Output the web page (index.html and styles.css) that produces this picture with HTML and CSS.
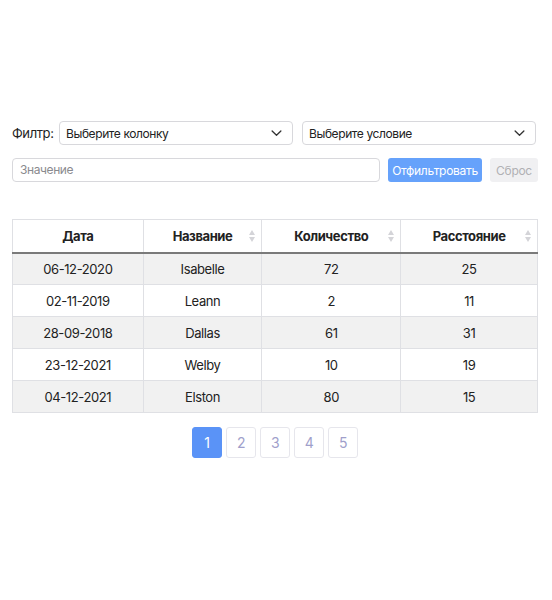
FILE: index.html
```html
<!DOCTYPE html>
<html lang="ru">
<head>
<meta charset="utf-8">
<link rel="stylesheet" href="styles.css">
</head>
<body>
<div class="page">
  <div class="filter-row">
    <span class="label">Филтр:</span>
    <div class="select"><span>Выберите колонку</span><svg class="chev" viewBox="0 0 12 8" width="11" height="7"><path d="M1 1.2 L6 6 L11 1.2" fill="none" stroke="#333" stroke-width="1.5" stroke-linecap="round" stroke-linejoin="round"/></svg></div>
    <div class="select"><span>Выберите условие</span><svg class="chev" viewBox="0 0 12 8" width="11" height="7"><path d="M1 1.2 L6 6 L11 1.2" fill="none" stroke="#333" stroke-width="1.5" stroke-linecap="round" stroke-linejoin="round"/></svg></div>
  </div>
  <div class="value-row">
    <div class="input">Значение</div>
    <button class="btn primary">Отфильтровать</button>
    <button class="btn reset">Сброс</button>
  </div>
  <table class="grid">
    <thead>
      <tr>
        <th class="c1">Дата</th>
        <th class="c2 sortable">Название<span class="sort"></span></th>
        <th class="c3 sortable">Количество<span class="sort"></span></th>
        <th class="c4 sortable">Расстояние<span class="sort"></span></th>
      </tr>
    </thead>
    <tbody>
      <tr><td>06-12-2020</td><td>Isabelle</td><td>72</td><td>25</td></tr>
      <tr><td>02-11-2019</td><td>Leann</td><td>2</td><td>11</td></tr>
      <tr><td>28-09-2018</td><td>Dallas</td><td>61</td><td>31</td></tr>
      <tr><td>23-12-2021</td><td>Welby</td><td>10</td><td>19</td></tr>
      <tr><td>04-12-2021</td><td>Elston</td><td>80</td><td>15</td></tr>
    </tbody>
  </table>
  <div class="pager">
    <span class="pg active">1</span>
    <span class="pg">2</span>
    <span class="pg">3</span>
    <span class="pg">4</span>
    <span class="pg">5</span>
  </div>
</div>
</body>
</html>
```
FILE: styles.css
```css
* { box-sizing: border-box; }
html, body { margin: 0; padding: 0; background: #fff; }
body {
  font-family: Inter, "Noto Sans", "DejaVu Sans", sans-serif;
  color: #222;
  letter-spacing: -0.025em;
}
.page {
  width: 552px;
  padding: 121px 14px 0 12px;
}
.filter-row {
  display: flex;
  align-items: center;
  height: 24px;
}
.label {
  font-size: 13px;
  width: 47px;
  color: #222;
}
.select {
  width: 234px;
  height: 24px;
  border: 1px solid #d8d8dc;
  border-radius: 4px;
  display: flex;
  align-items: center;
  justify-content: space-between;
  padding: 0 10px 0 6px;
  font-size: 12px;
  color: #222;
}
.select + .select { margin-left: 9px; }
.value-row {
  display: flex;
  align-items: center;
  gap: 8px;
  margin-top: 13px;
  height: 24px;
}
.input {
  width: 368px;
  height: 24px;
  border: 1px solid #d8d8dc;
  border-radius: 4px;
  padding: 0 7px;
  font-size: 12px;
  line-height: 22px;
  color: #8a8a8e;
}
.btn {
  height: 24px;
  border: none;
  border-radius: 3px;
  font-family: inherit;
  font-size: 12px;
  letter-spacing: -0.025em;
  padding: 0;
}
.primary {
  width: 94px;
  background: #66a2fb;
  color: #fff;
}
.reset {
  width: 48px;
  background: #f0f0f2;
  color: #b0b0b4;
}
.grid {
  margin-top: 37px;
  width: 526px;
  border-collapse: collapse;
  font-size: 13px;
  border: 1px solid #dfe0e4;
}
.grid th, .grid td {
  border-left: 1px solid #dfe0e4;
  border-right: 1px solid #dfe0e4;
  text-align: center;
  padding: 0;
}
.grid th {
  height: 33px;
  font-weight: 700;
  color: #222;
  border-bottom: 2px solid #7a7a7a;
  position: relative;
}
.grid td {
  height: 32px;
  border-top: 1px solid #dfe0e4;
  color: #222;
}
.grid tbody tr:nth-child(odd) { background: #f1f1f1; }
.c1 { width: 131px; }
.c2 { width: 119px; }
.c3 { width: 139px; }
.c4 { width: 137px; }
.sort {
  position: absolute;
  right: 5px;
  top: 50%;
  margin-top: -6px;
  width: 7px;
  height: 12px;
}
.sort::before, .sort::after {
  content: "";
  position: absolute;
  left: 0;
  border-left: 3.5px solid transparent;
  border-right: 3.5px solid transparent;
}
.sort::before { top: 0; border-bottom: 5px solid #d4d4d8; }
.sort::after { bottom: 0; border-top: 5px solid #d4d4d8; }
.pager {
  display: flex;
  justify-content: center;
  gap: 4px;
  margin-top: 14px;
}
.pg {
  width: 30px;
  height: 31px;
  border: 1px solid #e6e6ec;
  border-radius: 3px;
  display: flex;
  align-items: center;
  justify-content: center;
  font-size: 14px;
  color: #a09fcb;
}
.pg.active {
  background: #5a93f7;
  border-color: #5a93f7;
  color: #fff;
}
```
